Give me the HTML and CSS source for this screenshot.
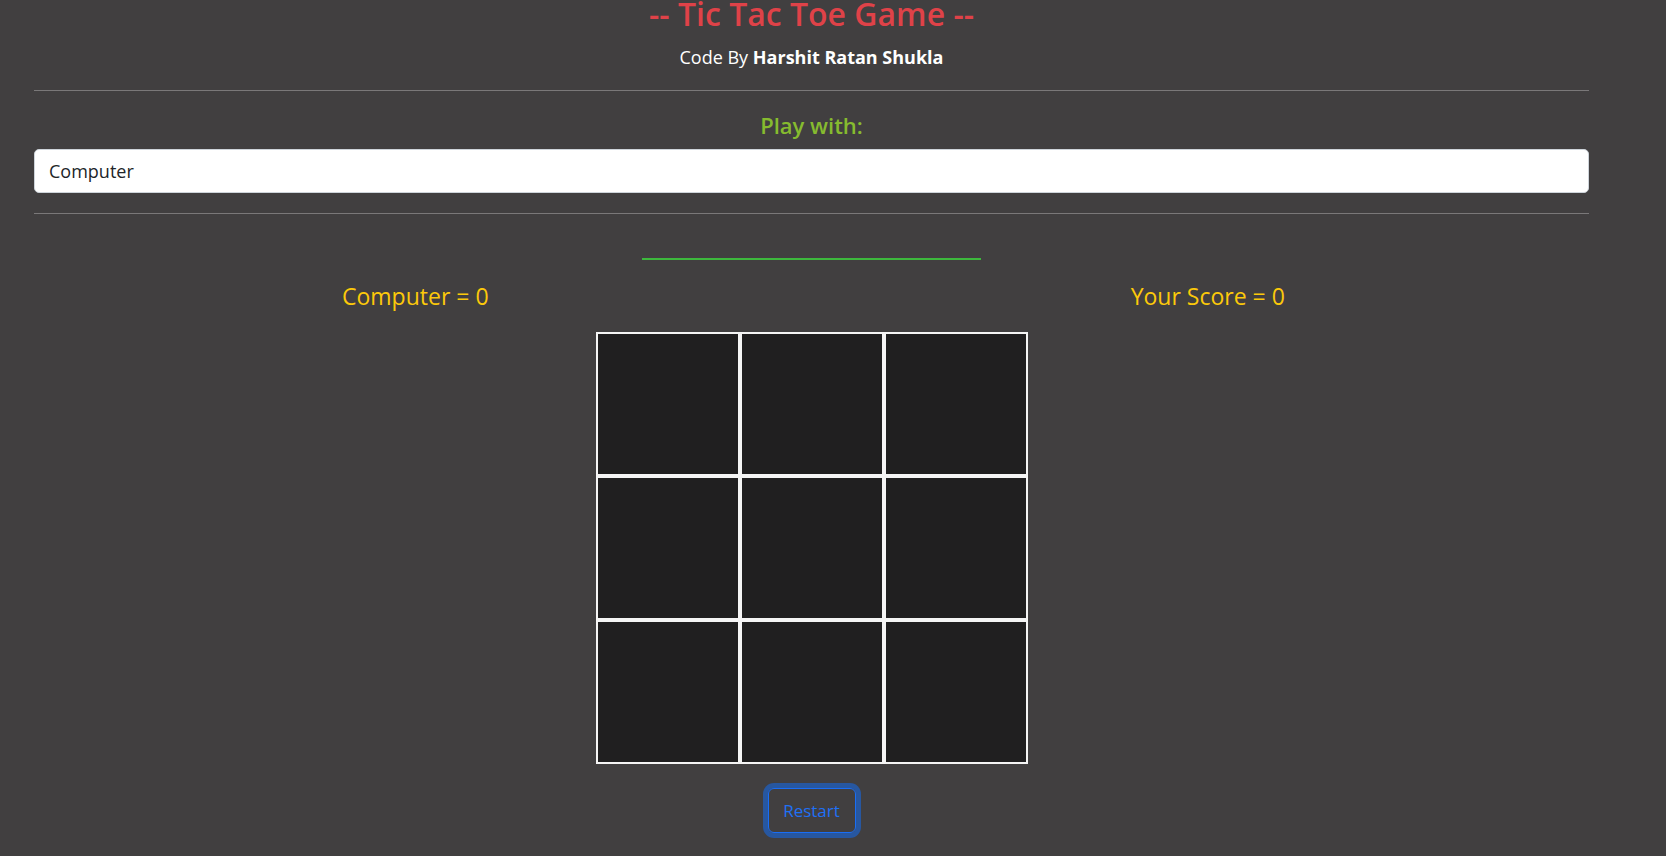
FILE: index.html
```html
<!DOCTYPE html>
<html lang="en">
<head>
<meta charset="utf-8">
<title>Tic Tac Toe Game</title>
<link rel="stylesheet" href="styles.css">
</head>
<body>
<div class="page">
  <h1 class="title">-- Tic Tac Toe Game --</h1>
  <p class="byline">Code By <b>Harshit Ratan Shukla</b></p>
  <hr class="rule">
  <h2 class="play-label">Play with:</h2>
  <div class="select">Computer</div>
  <hr class="rule rule-second">
  <div class="status"></div>
  <div class="scores">
    <div class="score">Computer = 0</div>
    <div class="score">Your Score = 0</div>
  </div>
  <div class="board">
    <div class="cell"></div><div class="cell"></div><div class="cell"></div>
    <div class="cell"></div><div class="cell"></div><div class="cell"></div>
    <div class="cell"></div><div class="cell"></div><div class="cell"></div>
  </div>
  <div class="actions">
    <button class="restart" type="button">Restart</button>
  </div>
</div>
</body>
</html>
```

FILE: styles.css
```css
* {
  box-sizing: border-box;
}

html, body {
  margin: 0;
  padding: 0;
  background: #413f40;
  overflow: hidden;
}

body {
  font-family: "Open Sans", "Noto Sans", "Liberation Sans", sans-serif;
  color: #fff;
  height: 856px;
}

.page {
  width: 1555px;
  margin-left: 34px;
  display: flex;
  flex-direction: column;
  text-align: center;
}

.title {
  margin: 0;
  padding-top: 1px;
  font-size: 32px;
  line-height: 26px;
  height: 27px;
  font-weight: 600;
  color: #df4248;
}

.byline {
  margin: 17px 0 0;
  font-size: 18px;
  line-height: 27px;
  color: #fff;
}

.byline b {
  font-weight: 700;
}

.rule {
  margin: 19px 0 0;
  border: 0;
  border-top: 1px solid #7a7879;
  height: 0;
}

.rule-second {
  margin-top: 20px;
}

.play-label {
  margin: 19px 0 0;
  font-size: 22px;
  line-height: 30px;
  font-weight: 600;
  color: #86bb2f;
}

.select {
  margin-top: 9px;
  height: 44px;
  background: #fff;
  border: 1px solid #ced4da;
  border-radius: 5px;
  padding: 0 14px;
  text-align: left;
  font-size: 18px;
  line-height: 42px;
  color: #212529;
}

.status {
  margin: 44px auto 0;
  width: 339px;
  height: 2px;
  background: #3db83d;
}

.scores {
  margin: 20px -15px 0;
  display: grid;
  grid-template-columns: 1fr 1fr;
}

.score {
  font-size: 23px;
  line-height: 32px;
  color: #fcc90a;
  text-align: center;
}

.board {
  margin: 20px auto 0;
  display: grid;
  grid-template-columns: repeat(3, 144px);
  grid-template-rows: repeat(3, 144px);
}

.cell {
  background: #201f20;
  border: 2px solid #f5f5f5;
}

.actions {
  margin-top: 24px;
  display: flex;
  justify-content: center;
}

.restart {
  width: 88px;
  height: 45px;
  padding: 0;
  background: transparent;
  border: 1px solid #1a6ef5;
  border-radius: 6px;
  box-shadow: 0 0 0 5px #2757a0;
  font-family: "Open Sans", "Noto Sans", "Liberation Sans", sans-serif;
  font-size: 17px;
  line-height: 43px;
  color: #1f70f5;
  cursor: pointer;
}
```
